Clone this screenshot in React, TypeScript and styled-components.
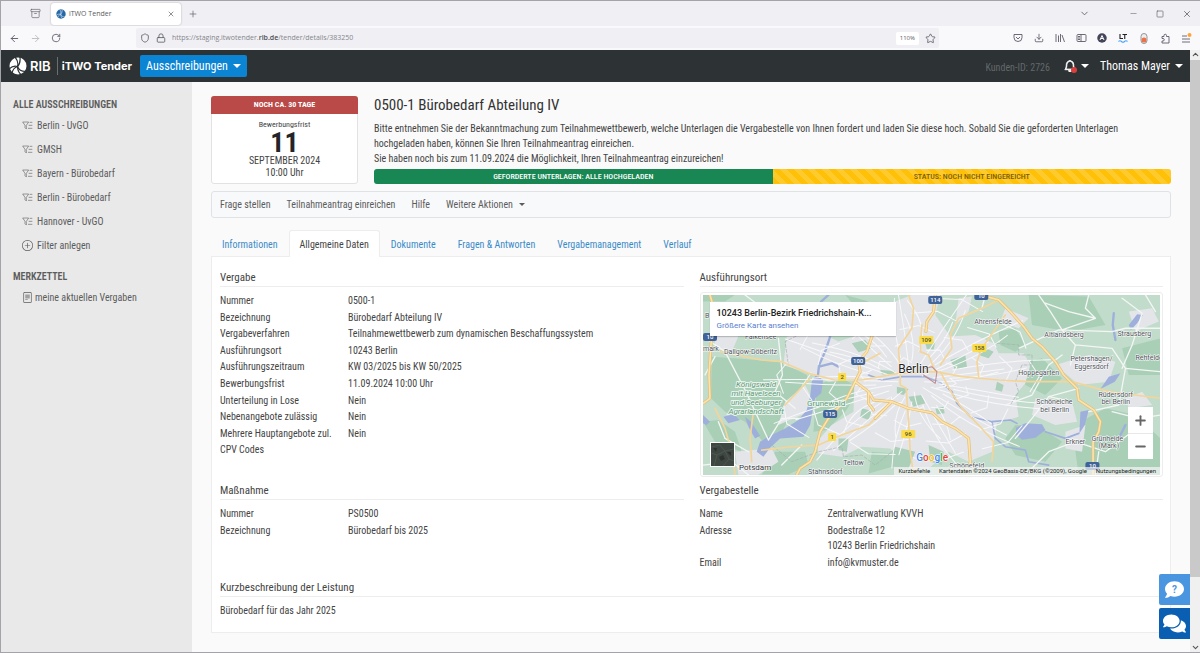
import React from "react";
import styled, { createGlobalStyle, css } from "styled-components";
import { BsBell, BsFileText, BsPlusCircle } from "react-icons/bs";
import { FaComment, FaComments } from "react-icons/fa";
import {
  ArrowLeft, ArrowRight, RotateCw, Shield, Lock, Star, Download, PanelLeft, Puzzle,
  X, Plus, Minus, Square, ChevronDown, ChevronUp, Archive,
} from "lucide-react";

const condensed = '"Roboto Condensed", "Liberation Sans Narrow", Roboto, sans-serif';

const GlobalStyle = createGlobalStyle`
  *, *::before, *::after { box-sizing: border-box; }
  body { margin: 0; background: #fafafa; color: #444; font: 10px/15px ${condensed}; }
  button, input { font: inherit; color: inherit; border: 0; padding: 0; background: none; }
  button { cursor: pointer; }
  a { color: inherit; text-decoration: none; }
  h1, h2, p, ul, dl, dd { margin: 0; padding: 0; }
  ul { list-style: none; }
  svg { display: block; flex: none; }
`;

const Window = styled.div`
  position: relative;
  min-height: 100vh;
  display: flex;
  flex-direction: column;
  border: 1px solid #a3a3a8;
  border-right: 0;
`;

/* Browser chrome */

const TabStrip = styled.div`
  display: flex;
  align-items: center;
  height: 25px;
  padding: 0 6px 0 27px;
  background: #f0eff4;
  color: #65656b;
`;

const BrowserTab = styled.div`
  display: flex;
  align-items: center;
  gap: 3px;
  width: 130px;
  height: 22px;
  margin: 0 5px 0 9px;
  padding: 0 3px 0 5px;
  background: #fff;
  border-radius: 3px;
  box-shadow: 0 0 2px rgba(0, 0, 0, 0.3);
  font: 7px/12px "Open Sans", sans-serif;
  color: #5b5b60;
  span { flex: 1; }
`;

const ChromeButton = styled.button`
  display: flex;
  align-items: center;
  justify-content: center;
  width: 14px;
  height: 14px;
`;

const WindowControls = styled.div`
  display: flex;
  gap: 13px;
  margin-left: auto;
  button:first-child { margin-right: 22px; }
`;

const AddressRow = styled.div`
  display: flex;
  align-items: center;
  height: 24px;
  padding: 0 7px 0 6px;
  background: #f9f9fb;
  color: #5b5b66;
`;

const NavButtons = styled.div`
  display: flex;
  gap: 7px;
  width: 129px;
  button:nth-child(2) { color: #bbb; }
`;

const AddressBox = styled.div`
  display: flex;
  align-items: center;
  gap: 6px;
  flex: 1;
  height: 20px;
  padding: 0 3px 0 4px;
  background: #f0f0f4;
  border-radius: 2px;
`;

const Url = styled.div`
  flex: 1;
  font: 7px/12px "Open Sans", sans-serif;
  color: #85858c;
  b { font-weight: 600; color: #4c4c52; }
`;

const Zoom = styled.span`
  padding: 0 4px;
  font: 6px/13px "Open Sans", sans-serif;
  background: #fff;
  border-radius: 2px;
`;

const Extensions = styled.div`
  display: flex;
  gap: 7px;
  margin-left: 72px;
`;

/* Application header */

const Body = styled.div`
  display: flex;
  flex: 1;
`;

const App_ = styled.div`
  display: flex;
  flex-direction: column;
  flex: 1;
  min-width: 0;
`;

const Header = styled.header`
  display: flex;
  align-items: center;
  height: 32px;
  padding: 0 7px 0 8px;
  background: #2d3235;
  color: #fff;
`;

const Brand = styled.a`
  display: flex;
  align-items: center;
  gap: 3px;
  font: 600 13px/18px Inter, sans-serif;
  span + span {
    margin-left: 3px;
    padding-left: 4px;
    border-left: 1px solid #6a6f72;
    font-size: 11px;
    font-weight: 700;
  }
`;

const Caret = styled.i<{ $large?: boolean }>`
  display: inline-block;
  border: ${(p) => (p.$large ? 4 : 3)}px solid transparent;
  border-top-color: currentColor;
  border-bottom: 0;
`;

const ModuleButton = styled.button`
  display: flex;
  align-items: center;
  gap: 5px;
  height: 22px;
  margin-left: 8px;
  padding: 0 6px;
  background: #0b84d4;
  border-radius: 2px;
  font-size: 12px;
`;

const CustomerId = styled.span`
  margin: 3px 14px 0 auto;
  font-size: 10px;
  color: #63686b;
`;

const HeaderButton = styled.button`
  display: flex;
  align-items: center;
  gap: 5px;
  margin-right: 11px;
  font-size: 12px;
  &:last-child { margin-right: 0; }
`;

const BellIcon = styled.span`
  position: relative;
  &::after {
    content: "";
    position: absolute;
    right: -1px;
    bottom: -1px;
    width: 6px;
    height: 6px;
    border-radius: 50%;
    background: #d9403c;
  }
`;

/* Sidebar */

const Columns = styled.div`
  display: flex;
  flex: 1;
`;

const Sidebar = styled.nav`
  width: 191px;
  flex: none;
  padding: 15px 12px;
  background: #e9e9e9;
  color: #5c5c5c;
`;

const SideTitle = styled.h2`
  font-size: 10px;
  line-height: 15px;
  font-weight: 600;
`;

const SideList = styled.ul`
  padding: 1px 0 12px 9px;
`;

const SideLink = styled.a<{ $tight?: boolean }>`
  display: flex;
  align-items: center;
  gap: ${(p) => (p.$tight ? 2 : 4)}px;
  height: 24px;
`;

/* Summary area */

const Main = styled.main`
  flex: 1;
  min-width: 0;
  padding: 14px 19px 19px;
`;

const Summary = styled.section`
  display: flex;
  gap: 16px;
`;

const Deadline = styled.div`
  width: 147px;
  flex: none;
  border: 1px solid #e2e2e2;
  border-radius: 3px;
  background: #fff;
  text-align: center;
  line-height: 12px;
`;

const DeadlineHead = styled.div`
  margin: -1px -1px 0;
  border-radius: 3px 3px 0 0;
  background: #b94a48;
  color: #fff;
  font-size: 8px;
  line-height: 18px;
  font-weight: 700;
`;

const DeadlineLabel = styled.div`
  padding-top: 5px;
  font-size: 8px;
  line-height: 11px;
`;

const DeadlineDay = styled.div`
  font-size: 28px;
  line-height: 25px;
  font-weight: 700;
  color: #212529;
`;

const Intro = styled.div`
  flex: 1;
  min-width: 0;
`;

const Title = styled.h1`
  padding-bottom: 6px;
  font-size: 15px;
  line-height: 19px;
  font-weight: 400;
  color: #333;
`;

const Progress = styled.div`
  display: flex;
  margin-top: 3px;
  border-radius: 3px;
  overflow: hidden;
  text-align: center;
  font-size: 8px;
  line-height: 15px;
`;

const ProgressPart = styled.div<{ $pending?: boolean }>`
  flex: 1;
  background: #198754;
  color: #fff;
  font-weight: 500;
  ${(p) =>
    p.$pending &&
    css`
      color: #7a5e0c;
      background: repeating-linear-gradient(45deg, #ffc107 0 5px, #ffca2c 5px 10px);
    `}
`;

const Actions = styled.div`
  display: flex;
  align-items: center;
  gap: 16px;
  height: 27px;
  margin-top: 7px;
  padding: 0 8px;
  background: #f8f9fb;
  border: 1px solid #dfe3e6;
  border-radius: 3px;
  color: #5c5c5c;
`;

const ActionButton = styled.button`
  display: flex;
  align-items: center;
  gap: 6px;
`;

const Tabs = styled.div`
  display: flex;
  margin-top: 12px;
`;

const Tab = styled.button<{ $active?: boolean }>`
  height: 27px;
  margin-bottom: -1px;
  padding: 0 10px;
  border: 1px solid transparent;
  border-bottom: 0;
  border-radius: 3px 3px 0 0;
  color: #3a8ac8;
  ${(p) =>
    p.$active &&
    css`
      position: relative;
      background: #fff;
      border-color: #ededed;
      color: #444;
    `}
`;

const Panel = styled.section`
  padding: 9px 7px 13px 8px;
  background: #fff;
  border: 1px solid #ededed;
`;

const PanelGrid = styled.div`
  display: grid;
  grid-template-columns: 1fr 1fr;
  column-gap: 16px;
`;

const BlockTitle = styled.h2`
  margin-bottom: 5px;
  padding-top: 3px;
  border-bottom: 1px solid #ededed;
  font-size: 11px;
  line-height: 17px;
  font-weight: 400;
`;

const Facts = styled.dl<{ $fill?: boolean }>`
  display: grid;
  grid-template-columns: 128px 1fr;
  grid-auto-rows: ${(p) => (p.$fill ? "1fr" : "auto")};
  height: ${(p) => (p.$fill ? "166px" : "auto")};
  dt, dd { padding: ${(p) => (p.$fill ? "1px 0 0" : "1px 0")}; }
`;

const Description = styled.section`
  margin-top: 5px;
  p { padding: 1px 0; }
`;

/* Map */

const MapFrame = styled.div`
  margin-bottom: 2px;
  padding: 2px 2px 1px;
  border: 1px solid #ededed;
  border-radius: 3px;
`;

const MapArea = styled.div`
  position: relative;
  height: 180px;
  overflow: hidden;
`;

const MapCard = styled.div`
  position: absolute;
  top: 7px;
  left: 7px;
  width: 186px;
  padding: 4px 7px 5px;
  background: #fff;
  box-shadow: 0 1px 1px rgba(0, 0, 0, 0.2);
  font: 500 9px/14px Roboto, sans-serif;
  color: #222;
  a { display: block; font-size: 8px; line-height: 11px; font-weight: 400; color: #5a80d0; }
`;

const MapZoom = styled.div`
  position: absolute;
  right: 7px;
  bottom: 16px;
  width: 25px;
  background: #fff;
  color: #666;
  button { display: flex; align-items: center; justify-content: center; width: 25px; height: 26px; }
  button + button { box-shadow: inset 0 1px #e8e8e8; }
`;

const Satellite = styled.button`
  position: absolute;
  left: 7px;
  bottom: 8px;
  border: 1px solid #fff;
`;

const MapCredits = styled.div`
  position: absolute;
  right: 0;
  bottom: 0;
  display: flex;
  gap: 9px;
  padding: 0 4px;
  background: rgba(245, 245, 245, 0.7);
  font: 6px/8px Roboto, sans-serif;
  color: #222;
`;

/* Scrollbar and help buttons */

const Scroll = styled.div`
  display: flex;
  flex-direction: column;
  align-items: center;
  justify-content: space-between;
  width: 10px;
  background: #f0f0f0;
  color: #555;
`;

const Thumb = styled.div`
  width: 10px;
  flex: 1;
  margin: 1px 0 66px;
  background: #c9c9c9;
`;

const HelpDock = styled.div`
  position: absolute;
  right: 10px;
  bottom: 13px;
  display: flex;
  flex-direction: column;
  gap: 3px;
`;

const HelpButton = styled.button<{ $dark?: boolean }>`
  position: relative;
  display: flex;
  align-items: center;
  justify-content: center;
  width: 31px;
  height: 31px;
  border-radius: 2px 0 0 2px;
  color: #fff;
  background: ${(p) => (p.$dark ? "#0b5fb3" : "#4a95e0")};
`;

const Question = styled.span`
  position: absolute;
  font: 700 10px/12px Roboto, sans-serif;
  color: #4a95e0;
`;

function RibLogo({ size, color, line }: { size: number; color: string; line: string }) {
  return (
    <svg width={size} height={size} viewBox="0 0 36 36" aria-hidden="true">
      <circle cx="18" cy="18" r="17" fill={color} />
      <g fill="none" stroke={line} strokeWidth="2.4">
        <path d="M17 19C19 13 17 6 12 0" />
        <path d="M17 19C21 15 23 9 22 0" />
        <path d="M17 19C11 17 5 19 0 24" />
        <path d="M17 19C11 21 7 26 6 33" />
        <path d="M17 19C19 25 25 29 33 29" />
        <path d="M17 19C17 26 20 32 25 36" />
      </g>
    </svg>
  );
}

function FilterIcon() {
  return (
    <svg width="11" height="9" viewBox="0 0 33 27" fill="none" stroke="#6a6a6a" strokeWidth="2" aria-hidden="true">
      <path d="M2 3H20L13 13V24L9 20V13Z" />
      <path d="M23 4H31M20 13H31M18 22H31" />
    </svg>
  );
}

type Place = [string, number, number];

const places: Place[] = [
  ["B", 2, 23], ["mark", 0, 56], ["Falkensee", 42, 44], ["Dallgow-Döberitz", 21, 59], ["Ahrensfelde", 271, 29],
  ["Altlandsberg", 341, 42], ["Strausberg", 414, 41], ["Petershagen/", 367, 66],
  ["Eggersdorf", 371, 74], ["Rehfelde", 432, 65], ["Hoppegarten", 315, 80],
  ["Schöneiche", 333, 109], ["bei Berlin", 337, 117], ["Rüdersdorf", 395, 102],
  ["bei Berlin", 398, 109], ["Erkner", 362, 149], ["Grünheide", 388, 146],
  ["(Mark)", 395, 153], ["Teltow", 140, 170], ["Stahnsdorf", 105, 179], ["Schönefeld", 246, 173],
];

const parks = ["Königswald", "mit Havelseen", "und Seeburger", "Agrarlandschaft"];

const shields: { t: string; x: number; y: number; blue?: boolean }[] = [
  { t: "114", x: 232, y: 5, blue: true }, { t: "10", x: 278, y: 1, blue: true },
  { t: "100", x: 155, y: 66, blue: true }, { t: "115", x: 127, y: 119, blue: true },
  { t: "10", x: 7, y: 42, blue: true }, { t: "10", x: 389, y: 171, blue: true },
  { t: "109", x: 223, y: 45 }, { t: "158", x: 276, y: 53 }, { t: "2", x: 139, y: 82 },
  { t: "1", x: 129, y: 142 }, { t: "96", x: 205, y: 139 },
];

function streets() {
  const out: string[] = [];
  for (let i = 0; i < 44; i++) {
    const a = (i / 44) * Math.PI * 2;
    const r0 = 30 + ((i * 37) % 90);
    const r1 = 210 + ((i * 53) % 170);
    const b = a + (((i * 29) % 17) - 8) / 45;
    const mid = (r0 + r1) / 2;
    const p = (ang: number, r: number) =>
      `${Math.round(650 + Math.cos(ang) * r * 1.25)} ${Math.round(350 + Math.sin(ang) * r * 0.78)}`;
    out.push(`M${p(a, r0)}Q${p(a + 0.06, mid)} ${p(b, r1)}`);
    const ring = 70 + ((i * 61) % 260);
    out.push(`M${p(a, ring)}L${p(a + 0.22, ring + 14)}L${p(a + 0.42, ring - 6)}`);
  }
  return out.join("");
}

function MapDrawing() {
  return (
    <svg width="100%" height="180" viewBox="0 0 457 180" preserveAspectRatio="xMidYMid slice" aria-label="Karte Berlin">
      <rect width="457" height="180" fill="#c1dccb" />
      <g transform="translate(-8 -30) scale(0.33333)" fill="none" strokeLinejoin="round" strokeLinecap="round">
        <g fill="#a9cfb7">
          <path d="M50 275L150 282L258 292L335 330L340 350L285 400L290 445L250 520L200 525L150 470L90 440L48 400Z" />
          <path d="M375 355L440 338L475 360L480 395L450 440L395 495L355 500L362 400Z" />
          <path d="M24 90H120L90 110H24ZM24 470L70 465L120 500L140 560L60 530ZM240 560L330 560L340 600L280 628H200Z" />
          <path d="M450 90L520 110L480 125ZM910 200L960 190L990 240L960 260L915 240ZM1000 90L1180 95L1230 180L1120 200L1010 180Z" />
          <path d="M1155 470L1230 430L1320 450L1395 520V630H1150L1140 560ZM960 480L1040 490L1100 530L1050 590L960 570L930 520Z" />
          <path d="M980 290L1040 280L1100 340L1050 390L990 360ZM1280 250L1395 220V330L1300 330ZM530 560L600 565L610 600L520 625Z" />
        </g>
        <path
          fill="#e4e5e9"
          d="M275 215L370 200L430 230L520 200L590 210L600 110L650 90L735 90L720 150L765 215L840 210L895 235L910 265L985 265L1005 300L990 355L960 390L970 455L905 475L890 560L820 590L760 560L700 610H640L585 550L500 545L440 575L370 565L365 530L410 480L475 440L478 345L400 350L340 325L265 300Z"
        />
        <g fill="#e4e5e9">
          <path d="M1020 400L1130 410L1145 470L1080 480L1010 450ZM1080 300L1180 270L1260 290L1240 350L1150 360ZM1300 140L1370 130L1390 170L1320 200ZM1290 400L1340 380L1370 420L1300 430ZM1110 500L1170 480L1160 560L1110 550Z" />
          <path d="M120 560L230 550L250 590L190 629H130ZM270 410L330 360L350 400L340 440L250 480ZM60 190L130 215L110 260L60 250ZM930 130L1000 160L970 190L915 170ZM790 100L830 95L820 140L780 180Z" />
        </g>
        <g fill="#abcfb8">
          <path d="M470 235L510 225L530 250L490 262ZM640 395L680 390L690 415L655 425ZM555 315L600 318L595 330L560 328ZM690 235L720 230L715 255L695 252ZM765 285L810 270L815 305L780 315ZM560 600L600 545L660 560L640 610Z" />
          <path d="M605 365L640 372L625 390L605 385ZM500 430L530 438L520 465L495 455ZM430 520L460 520L455 560L430 555ZM850 240L895 260L880 280L850 270ZM905 350L925 360L920 380L900 375ZM720 430L745 425L748 445L725 448ZM700 540L745 560L740 600L705 590Z" />
        </g>
        <g fill="#9eafdc">
          <path d="M362 330L384 345L378 385L360 400L352 440L345 480L325 515L255 520L225 548L205 575L185 560L195 530L225 512L270 490L310 465L335 435L345 395L350 350Z" />
          <path d="M85 455L115 448L135 465L100 475ZM150 455L168 470L195 512L180 520L160 485ZM24 450L45 470L35 480L24 475Z" />
          <path d="M962 488L990 475L1040 478L1050 495L1020 518L980 524L962 508ZM1215 372L1240 335L1275 325L1258 350ZM1300 180L1325 148L1342 150L1325 175L1306 195ZM1155 440L1180 435L1168 480L1152 505Z" />
        </g>
        <g stroke="#9eafdc" strokeWidth="7">
          <path d="M400 90L378 110M405 215L390 260L372 300L368 335M372 305L410 295L430 305M1255 145L1252 180L1260 225M1270 520L1290 480" />
          <path d="M520 330L560 345L620 335L690 335L740 355L770 380L785 415L825 455L890 470L945 465L965 475M890 470L900 520L930 545L990 555L1000 590L1060 600M1050 500L1110 520L1150 505" strokeWidth="5" />
        </g>
        <path d={streets()} stroke="#f8f8fa" strokeWidth="3" />
        <g stroke="#f3f6f4" strokeWidth="4">
          <path d="M24 215L90 260L150 375L220 525L260 460L310 460M60 275L30 330M150 90L190 120M250 220L262 330L240 380L300 430M160 560L90 520L70 470M24 600L110 590L160 629M320 540L260 600" />
          <path d="M1030 90L1065 140L1100 195L1140 240L1125 300M1100 195L1200 160L1120 140L1050 115M970 250L1090 195L1250 200L1290 190L1395 190M1140 240L1250 250L1290 310L1395 320M1290 310L1270 420L1180 440M1180 90L1170 130L1200 160M1280 100L1320 130L1340 145L1310 240L1280 310" />
          <path d="M930 420L1010 390L1060 300L1100 270M960 520L1010 460L1060 395L1130 410M1060 395L1150 370M990 629L1060 560L1140 530L1230 560L1310 500M1200 629L1210 560M1250 440L1330 460L1395 450M870 90L860 130L790 160M1350 90L1380 140" />
        </g>
        <path stroke="#a4b0ad" strokeWidth="2" strokeDasharray="9 6" d="M230 540L290 590L370 560L440 545L445 575L500 570L540 600L590 560M905 235L970 240L970 270H1010V300H980L960 350L970 380L945 420M370 120L330 200L270 230L280 300" />
        <g stroke="#f3d59a" strokeWidth="5">
          <path d="M75 260L200 285L260 290L340 325L420 345L500 345L610 325L720 320L800 335L910 345L1000 350L1130 350L1240 380L1395 400M200 555L290 545L370 540L440 510L520 480L590 410" />
          <path d="M640 90L655 130L650 190L610 250L615 330L615 360L633 370L640 470L645 560L655 629M720 320L700 270L675 260L680 180M735 300L770 250L765 210L790 160L860 130L910 105M735 320L770 385L800 430L850 480L895 530L890 590M850 335L845 290L860 250L930 150M60 430L90 490L110 560L120 629M175 440L165 520L170 590M345 340L270 420M490 300L555 265" />
        </g>
        {["#e5bd76", "#fbe3aa"].map((stroke, i) => (
          <g key={stroke} stroke={stroke} strokeWidth={i ? 5 : 9}>
            <path d="M50 210L42 330L45 400L25 415M52 210L62 150L45 90M480 350L495 320L490 290L515 260L530 215M480 350L455 400L400 460L375 500L360 560L345 590L315 610L305 629M480 350L520 380L535 405L590 410L640 430L710 443L740 470L780 490L820 520L825 590L815 629M590 410L540 460M520 380L520 415L535 435M720 90L715 140L695 170L692 200" />
            <path d="M855 90L910 105L945 140L985 185L1010 220L1040 245L1080 290L1105 330L1145 370L1150 405L1195 435L1215 470L1210 500L1193 530L1193 629" />
          </g>
        ))}
        <path d="M685 330L720 355L725 320L710 305L690 310" stroke="#c08a8a" strokeWidth="3" />
      </g>
      {shields.map((s, i) => (
        <g key={i}>
          <rect
            x={s.x - (s.t.length > 1 ? 7 : 4)} y={s.y - 4} width={s.t.length > 1 ? 14 : 8} height="8" rx={s.blue ? 2 : 1}
            fill={s.blue ? "#3f6299" : "#fbdc4a"}
          />
          <text x={s.x} y={s.y + 2} textAnchor="middle" fontSize="6" fontWeight="500" fontFamily="Roboto, sans-serif" fill={s.blue ? "#fff" : "#5a5420"}>{s.t}</text>
        </g>
      ))}
      <g fontFamily="Roboto, sans-serif" fontSize="7" fill="#4c5157" stroke="#fff" strokeWidth="1" paintOrder="stroke">
        {places.map(([t, x, y], i) => <text key={i} x={x} y={y}>{t}</text>)}
        <text x="36" y="175" fontSize="8" fill="#333">Potsdam</text>
        <text x="195" y="78" fontSize="12" fill="#222">Berlin</text>
      </g>
      <g fontFamily="Roboto, sans-serif" fontSize="8" fill="#5f9a78" stroke="#e8f3ec" strokeWidth="2" paintOrder="stroke">
        {parks.map((t, i) => (
          <text key={t} x="53" y={92 + i * 9} textAnchor="middle" fontStyle="italic">{t}</text>
        ))}
        <text x="104" y="111">Grunewald</text>
      </g>
      <text x="213" y="166" fontSize="10" fontWeight="500" fontFamily="Roboto, sans-serif" stroke="#fff" strokeWidth="1" paintOrder="stroke">
        <tspan fill="#4285f4">G</tspan><tspan fill="#ea4335">o</tspan><tspan fill="#fbbc05">o</tspan><tspan fill="#4285f4">g</tspan><tspan fill="#34a853">l</tspan><tspan fill="#ea4335">e</tspan>
      </text>
    </svg>
  );
}

function SatelliteThumb() {
  return (
    <svg width="23" height="23" viewBox="0 0 23 23" aria-hidden="true">
      <rect width="23" height="23" fill="#3f4743" />
      <path d="M0 4L9 2L14 8L23 6M3 23L6 12L14 8L18 16L23 18M6 12L0 10M12 23L18 16" stroke="#4d5651" fill="none" />
      <path d="M8 14L12 12L14 16L10 18ZM16 9L20 9L20 13ZM2 5L6 5L5 9Z" fill="#2c332f" />
    </svg>
  );
}

const filters = ["Berlin - UvGO", "GMSH", "Bayern - Bürobedarf", "Berlin - Bürobedarf", "Hannover - UvGO"];

const tender: [string, string][] = [
  ["Nummer", "0500-1"],
  ["Bezeichnung", "Bürobedarf Abteilung IV"],
  ["Vergabeverfahren", "Teilnahmewettbewerb zum dynamischen Beschaffungssystem"],
  ["Ausführungsort", "10243 Berlin"],
  ["Ausführungszeitraum", "KW 03/2025 bis KW 50/2025"],
  ["Bewerbungsfrist", "11.09.2024 10:00 Uhr"],
  ["Unterteilung in Lose", "Nein"],
  ["Nebenangebote zulässig", "Nein"],
  ["Mehrere Hauptangebote zul.", "Nein"],
  ["CPV Codes", ""],
];

const tabs = ["Informationen", "Allgemeine Daten", "Dokumente", "Fragen & Antworten", "Vergabemanagement", "Verlauf"];

function FactList({ rows, fill }: { rows: [string, React.ReactNode][]; fill?: boolean }) {
  return (
    <Facts $fill={fill}>
      {rows.map(([k, v]) => (
        <React.Fragment key={k}>
          <dt>{k}</dt>
          <dd>{v}</dd>
        </React.Fragment>
      ))}
    </Facts>
  );
}

function BrowserChrome() {
  return (
    <>
      <TabStrip>
        <ChromeButton aria-label="Letzte Tabs"><Archive size={11} strokeWidth={1.5} /></ChromeButton>
        <BrowserTab>
          <RibLogo size={10} color="#2468a8" line="#d5e4f2" />
          <span>iTWO Tender</span>
          <ChromeButton aria-label="Tab schließen"><X size={8} strokeWidth={2} /></ChromeButton>
        </BrowserTab>
        <ChromeButton aria-label="Neuer Tab"><Plus size={10} strokeWidth={1.7} /></ChromeButton>
        <WindowControls>
          <ChromeButton aria-label="Tabs auflisten"><ChevronDown size={11} strokeWidth={2} /></ChromeButton>
          <ChromeButton aria-label="Minimieren"><Minus size={9} strokeWidth={1.5} /></ChromeButton>
          <ChromeButton aria-label="Maximieren"><Square size={8} strokeWidth={2} /></ChromeButton>
          <ChromeButton aria-label="Schließen"><X size={10} strokeWidth={2} /></ChromeButton>
        </WindowControls>
      </TabStrip>
      <AddressRow>
        <NavButtons>
          <ChromeButton aria-label="Zurück"><ArrowLeft size={11} strokeWidth={2} /></ChromeButton>
          <ChromeButton aria-label="Vor"><ArrowRight size={11} strokeWidth={2} /></ChromeButton>
          <ChromeButton aria-label="Neu laden"><RotateCw size={10} strokeWidth={2} /></ChromeButton>
        </NavButtons>
        <AddressBox>
          <Shield size={10} strokeWidth={2} />
          <Lock size={10} strokeWidth={2} />
          <Url>https://staging.itwotender.<b>rib.de</b>/tender/details/383250</Url>
          <Zoom>110%</Zoom>
          <Star size={11} strokeWidth={1.8} />
        </AddressBox>
        <Extensions>
          <ChromeButton aria-label="Pocket">
            <svg width="10" height="10" viewBox="0 0 20 20" fill="none" stroke="currentColor" strokeWidth="1.8"><path d="M2 3H18V9A8 8 0 0 1 2 9ZM6 8L10 12L14 8" /></svg>
          </ChromeButton>
          <ChromeButton aria-label="Downloads"><Download size={10} strokeWidth={2} /></ChromeButton>
          <ChromeButton aria-label="Bibliothek">
            <svg width="10" height="10" viewBox="0 0 20 20" fill="none" stroke="currentColor" strokeWidth="1.8"><path d="M2 2V18M7 5V18M11 2V18M14 4L19 18" /></svg>
          </ChromeButton>
          <ChromeButton aria-label="Seitenleiste">
            <svg width="11" height="10" viewBox="0 0 22 20" fill="none" stroke="currentColor" strokeWidth="1.8"><rect x="2" y="3" width="18" height="14" rx="2" /><path d="M10 3V17M4 7H8M4 10H8M4 13H8" /></svg>
          </ChromeButton>
          <ChromeButton aria-label="Konto">
            <svg width="10" height="10" viewBox="0 0 20 20"><circle cx="10" cy="10" r="9.5" fill="#45455a" /><path d="M6 14L10 5L14 14M8 11H12" stroke="#fff" strokeWidth="2" fill="none" /></svg>
          </ChromeButton>
          <ChromeButton aria-label="LanguageTool">
            <svg width="10" height="10" viewBox="0 0 20 20" fill="none"><path d="M4 2V11H10M9 3H18M13.500 3V12" stroke="#222" strokeWidth="2.200" /><path d="M1 17Q4 14 7 17T13 17T19 17" stroke="#4aa3ff" strokeWidth="2.200" /></svg>
          </ChromeButton>
          <ChromeButton aria-label="Erweiterung">
            <svg width="8" height="11" viewBox="0 0 16 22"><rect x="2" y="1" width="12" height="20" rx="6" fill="#eee" stroke="#8a8a90" strokeWidth="1.800" /><circle cx="8" cy="14" r="5" fill="#e8734a" /></svg>
          </ChromeButton>
          <ChromeButton aria-label="Erweiterungen">
            <svg width="11" height="11" viewBox="0 0 22 22" fill="none" stroke="currentColor" strokeWidth="1.8" strokeLinejoin="round"><path d="M4 7H8V5A2.500 2.500 0 0 1 13 5V7H18V20H4V16H6A2.500 2.500 0 0 0 6 11H4Z" /></svg>
          </ChromeButton>
          <ChromeButton aria-label="Menü">
            <svg width="11" height="11" viewBox="0 0 22 22"><path d="M2 6H12M2 12H18M2 18H18" stroke="currentColor" strokeWidth="1.800" /><circle cx="17" cy="4" r="4" fill="#ffa436" /></svg>
          </ChromeButton>
        </Extensions>
      </AddressRow>
    </>
  );
}

export default function App() {
  return (
    <Window>
      <GlobalStyle />
      <BrowserChrome />
      <Body>
        <App_>
          <Header>
            <Brand href="#">
              <RibLogo size={18} color="#fff" line="#2d3235" />
              <span>RIB</span>
              <span>iTWO Tender</span>
            </Brand>
            <ModuleButton>Ausschreibungen <Caret $large /></ModuleButton>
            <CustomerId>Kunden-ID: 2726</CustomerId>
            <HeaderButton aria-label="Benachrichtigungen">
              <BellIcon><BsBell size={12} strokeWidth={1} /></BellIcon> <Caret $large />
            </HeaderButton>
            <HeaderButton>Thomas Mayer <Caret $large /></HeaderButton>
          </Header>
          <Columns>
            <Sidebar>
              <SideTitle>ALLE AUSSCHREIBUNGEN</SideTitle>
              <SideList>
                {filters.map((f) => (
                  <li key={f}><SideLink href="#"><FilterIcon />{f}</SideLink></li>
                ))}
                <li><SideLink href="#"><BsPlusCircle size={11} />Filter anlegen</SideLink></li>
              </SideList>
              <SideTitle>MERKZETTEL</SideTitle>
              <SideList>
                <li><SideLink href="#" $tight><BsFileText size={11} />meine aktuellen Vergaben</SideLink></li>
              </SideList>
            </Sidebar>
            <Main>
              <Summary>
                <Deadline>
                  <DeadlineHead>NOCH CA. 30 TAGE</DeadlineHead>
                  <DeadlineLabel>Bewerbungsfrist</DeadlineLabel>
                  <DeadlineDay>11</DeadlineDay>
                  <div>SEPTEMBER 2024</div>
                  <div>10:00 Uhr</div>
                </Deadline>
                <Intro>
                  <Title>0500-1 Bürobedarf Abteilung IV</Title>
                  <p>
                    Bitte entnehmen Sie der Bekanntmachung zum Teilnahmewettbewerb, welche Unterlagen die Vergabestelle von
                    Ihnen fordert und laden Sie diese hoch. Sobald Sie die geforderten Unterlagen<br />
                    hochgeladen haben, können Sie Ihren Teilnahmeantrag einreichen.
                  </p>
                  <p>Sie haben noch bis zum 11.09.2024 die Möglichkeit, Ihren Teilnahmeantrag einzureichen!</p>
                  <Progress>
                    <ProgressPart>GEFORDERTE UNTERLAGEN: ALLE HOCHGELADEN</ProgressPart>
                    <ProgressPart $pending>STATUS: NOCH NICHT EINGEREICHT</ProgressPart>
                  </Progress>
                </Intro>
              </Summary>
              <Actions>
                <ActionButton>Frage stellen</ActionButton>
                <ActionButton>Teilnahmeantrag einreichen</ActionButton>
                <ActionButton>Hilfe</ActionButton>
                <ActionButton>Weitere Aktionen <Caret /></ActionButton>
              </Actions>
              <Tabs role="tablist">
                {tabs.map((t, i) => (
                  <Tab key={t} role="tab" aria-selected={i === 1} $active={i === 1}>{t}</Tab>
                ))}
              </Tabs>
              <Panel>
                <PanelGrid>
                  <section>
                    <BlockTitle>Vergabe</BlockTitle>
                    <FactList fill rows={tender} />
                  </section>
                  <section>
                    <BlockTitle>Ausführungsort</BlockTitle>
                    <MapFrame>
                      <MapArea>
                        <MapDrawing />
                        <MapCard>
                          10243 Berlin-Bezirk Friedrichshain-K...
                          <a href="#">Größere Karte ansehen</a>
                        </MapCard>
                        <Satellite aria-label="Satellitenbild"><SatelliteThumb /></Satellite>
                        <MapZoom>
                          <button aria-label="Vergrößern"><Plus size={15} strokeWidth={3} /></button>
                          <button aria-label="Verkleinern"><Minus size={15} strokeWidth={3} /></button>
                        </MapZoom>
                        <MapCredits>
                          <span>Kurzbefehle</span>
                          <span>Kartendaten ©2024 GeoBasis-DE/BKG (©2009), Google</span>
                          <span>Nutzungsbedingungen</span>
                        </MapCredits>
                      </MapArea>
                    </MapFrame>
                  </section>
                  <section>
                    <BlockTitle>Maßnahme</BlockTitle>
                    <FactList rows={[["Nummer", "PS0500"], ["Bezeichnung", "Bürobedarf bis 2025"]]} />
                  </section>
                  <section>
                    <BlockTitle>Vergabestelle</BlockTitle>
                    <FactList
                      rows={[
                        ["Name", "Zentralverwatlung KVVH"],
                        ["Adresse", <>Bodestraße 12<br />10243 Berlin Friedrichshain</>],
                        ["Email", "info@kvmuster.de"],
                      ]}
                    />
                  </section>
                </PanelGrid>
                <Description>
                  <BlockTitle>Kurzbeschreibung der Leistung</BlockTitle>
                  <p>Bürobedarf für das Jahr 2025</p>
                </Description>
              </Panel>
            </Main>
          </Columns>
        </App_>
        <Scroll aria-hidden="true">
          <ChevronUp size={9} strokeWidth={3} />
          <Thumb />
          <ChevronDown size={9} strokeWidth={3} />
        </Scroll>
      </Body>
      <HelpDock>
        <HelpButton aria-label="Hilfe"><FaComment size={19} /><Question>?</Question></HelpButton>
        <HelpButton aria-label="Chat" $dark><FaComments size={23} /></HelpButton>
      </HelpDock>
    </Window>
  );
}
